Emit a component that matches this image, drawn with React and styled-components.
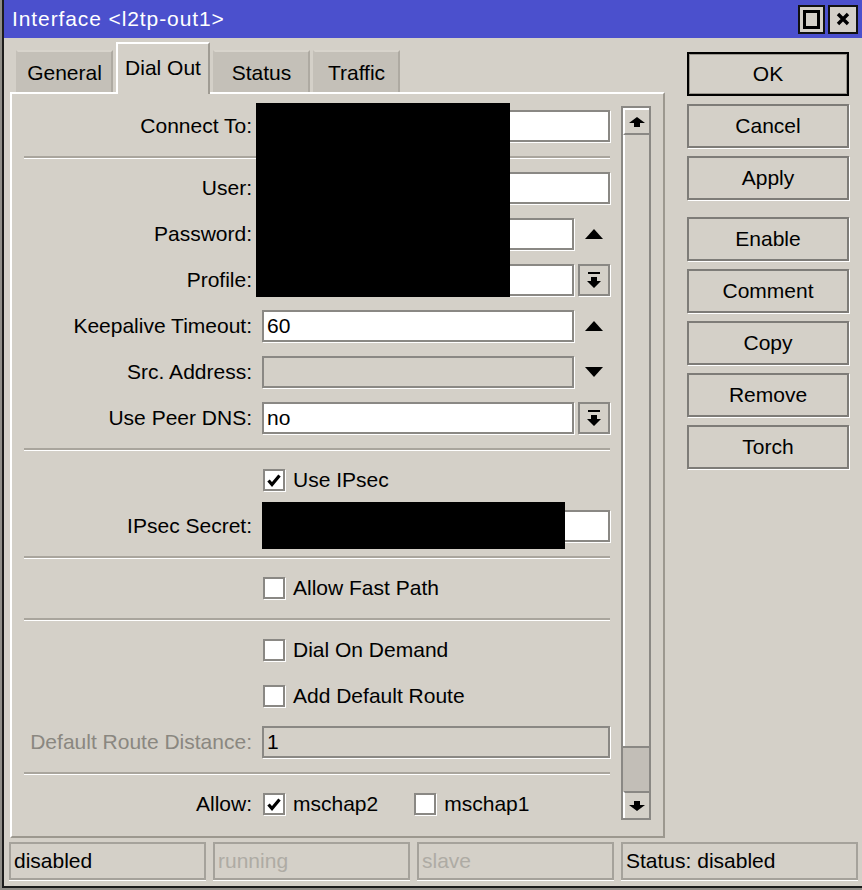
import React from "react";
import styled, { createGlobalStyle } from "styled-components";

const GlobalStyle = createGlobalStyle`
  html, body { margin: 0; padding: 0; background: #8f8d88; }
  body { font-family: "Liberation Sans", Arial, sans-serif; font-size: 21px; color: #000; }
  #root { width: 862px; height: 890px; overflow: hidden; }
  * { box-sizing: border-box; }
`;

const Window = styled.div`
  margin-left: 2px;
  width: 860px;
  height: 888px;
  background: #d4d0c8;
  border-left: 2px solid #1c1c1c;
  border-bottom: 2px solid #1c1c1c;
  display: flex;
  flex-direction: column;
`;

const TitleBar = styled.div`
  height: 38px;
  background: #4b50cd;
  display: flex;
  align-items: center;
  padding: 0 4px 0 8px;
  flex-shrink: 0;
`;

const Title = styled.div`
  color: #fff;
  font-size: 21px;
  letter-spacing: 0.9px;
  flex: 1;
  white-space: nowrap;
`;

const TitleBtn = styled.div`
  width: ${(p) => p.$w}px;
  height: 29px;
  margin-left: 3px;
  background: #d4d0c8;
  border: 2px solid #111;
  display: flex;
  align-items: center;
  justify-content: center;
`;

const Content = styled.div`
  display: flex;
  padding: 4px 0 0 6px;
  height: 800px;
`;

const Main = styled.div`
  width: 655px;
  display: flex;
  flex-direction: column;
`;

const Tabs = styled.div`
  height: 50px;
  display: flex;
  align-items: flex-end;
  padding-left: 6px;
  gap: 3px;
  position: relative;
  z-index: 1;
`;

const Tab = styled.div`
  width: ${(p) => p.$w}px;
  height: ${(p) => (p.$active ? 52 : 42)}px;
  margin-bottom: ${(p) => (p.$active ? -2 : 0)}px;
  background: ${(p) => (p.$active ? "#d4d0c8" : "#c4c0b8")};
  border-top: 2px solid ${(p) => (p.$active ? "#fff" : "#d8d4cc")};
  border-left: 2px solid ${(p) => (p.$active ? "#fff" : "#c4c0b8")};
  border-right: 2px solid ${(p) => (p.$active ? "#a09c94" : "#aeaaa2")};
  display: flex;
  align-items: ${(p) => (p.$active ? "flex-start" : "center")};
  padding-top: ${(p) => (p.$active ? 12 : 2)}px;
  justify-content: center;
  white-space: nowrap;
`;

const Panel = styled.div`
  position: relative;
  height: 746px;
  border-top: 2px solid #fff;
  border-left: 2px solid #fff;
  border-right: 2px solid #9c988f;
  border-bottom: 2px solid #9c988f;
  display: flex;
`;

const Form = styled.div`
  width: 609px;
  padding-top: 9px;
  display: flex;
  flex-direction: column;
`;

const Row = styled.div`
  display: grid;
  grid-template-columns: 240px 348px;
  column-gap: 10px;
  height: 46px;
  align-items: center;
`;

const Label = styled.div`
  text-align: right;
  white-space: nowrap;
  color: ${(p) => (p.$muted ? "#8a8780" : "#000")};
`;

const FieldGroup = styled.div`
  display: flex;
  align-items: center;
  gap: 4px;
`;

const Field = styled.div`
  width: ${(p) => (p.$short ? 312 : 348)}px;
  height: 32px;
  border: 2px solid #8a8884;
  box-shadow: 1px 1px 0 #fff;
  background: ${(p) => (p.$disabled ? "#d4d0c8" : "#fff")};
  padding-left: 3px;
  line-height: 28px;
  white-space: nowrap;
  overflow: hidden;
`;

const SideBtn = styled.div`
  width: 32px;
  height: 32px;
  border: 2px solid #8a8884;
  box-shadow: 1px 1px 0 #fff;
  background: #d4d0c8;
  display: flex;
  align-items: center;
  justify-content: center;
`;

const Glyph = styled.div`
  width: 32px;
  height: 32px;
  display: flex;
  align-items: center;
  justify-content: center;
`;

const Sep = styled.div`
  height: 16px;
  display: flex;
  align-items: center;
  padding-left: 12px;
`;

const SepLine = styled.div`
  width: 586px;
  border-top: 2px solid #a9a59d;
  border-bottom: 1px solid #fff;
`;

const Checks = styled.div`
  display: flex;
  align-items: center;
  padding-left: 1px;
`;

const Box = styled.div`
  width: 22px;
  height: 22px;
  border: 2px solid #8a8884;
  box-shadow: 1px 1px 0 #fff;
  background: #fff;
  display: flex;
  align-items: center;
  justify-content: center;
  flex-shrink: 0;
`;

const CheckText = styled.span`
  margin-left: 8px;
  margin-right: ${(p) => p.$gap || 0}px;
  white-space: nowrap;
`;

const Redact = styled.div`
  position: absolute;
  background: #000;
  left: ${(p) => p.$x}px;
  top: ${(p) => p.$y}px;
  width: ${(p) => p.$w}px;
  height: ${(p) => p.$h}px;
`;

const ScrollBar = styled.div`
  margin: 12px 0 0 0;
  width: 30px;
  height: 714px;
  border: 2px solid #8a8884;
  display: flex;
  flex-direction: column;
  background: #d4d0c8;
`;

const ScrollBtn = styled.div`
  height: 27px;
  border-top: 2px solid #fff;
  border-left: 2px solid #fff;
  border-bottom: 2px solid #8a8884;
  display: flex;
  align-items: center;
  justify-content: center;
  background: #d4d0c8;
  ${(p) => p.$down && "border-top: 2px solid #8a8884; border-bottom: none;"}
`;

const Track = styled.div`
  flex: 1;
  display: flex;
  flex-direction: column;
  justify-content: flex-end;
  border-left: 2px solid #fff;
`;

const Thumb = styled.div`
  height: 45px;
  background: #c2beb7;
  border-top: 2px solid #8a8884;
  margin-left: -2px;
`;

const Side = styled.div`
  margin-left: 22px;
  padding-top: 10px;
  width: 162px;
  display: flex;
  flex-direction: column;
  gap: 8px;
`;

const Button = styled.div`
  height: 44px;
  margin-top: ${(p) => p.$extra || 0}px;
  border: 2px solid ${(p) => (p.$default ? "#000" : "#7e7c78")};
  box-shadow: ${(p) => (p.$default ? "inset 0 0 0 1px #9a968e" : "1px 1px 0 #fff")};
  display: flex;
  align-items: center;
  justify-content: center;
  white-space: nowrap;
`;

const StatusBar = styled.div`
  margin-top: 4px;
  height: 38px;
  display: flex;
  gap: 7px;
  padding-left: 5px;
`;

const Cell = styled.div`
  width: ${(p) => p.$w}px;
  height: 38px;
  border: 2px solid #a5a29b;
  box-shadow: 0 1px 0 #fff;
  padding-left: 3px;
  line-height: 34px;
  white-space: nowrap;
  color: ${(p) => (p.$muted ? "#aeaba4" : "#000")};
`;

const UpTri = () => (
  <svg width="18" height="10" viewBox="0 0 18 10"><polygon points="9,0 18,10 0,10" fill="#000" /></svg>
);
const DownTri = () => (
  <svg width="18" height="10" viewBox="0 0 18 10"><polygon points="0,0 18,0 9,10" fill="#000" /></svg>
);
const DropIcon = () => (
  <svg width="14" height="16" viewBox="0 0 14 16">
    <rect x="1" y="0" width="12" height="2" fill="#000" />
    <polygon points="4,5 10,5 10,9 14,9 7,16 0,9 4,9" fill="#000" />
  </svg>
);
const ScrollArrow = ({ down }) => (
  <svg width="16" height="10" viewBox="0 0 16 10" style={down ? { transform: "rotate(180deg)" } : undefined}>
    <polygon points="8,0 16,6 11,6 11,10 5,10 5,6 0,6" fill="#000" />
  </svg>
);
const Check = () => (
  <svg width="14" height="13" viewBox="0 0 14 13">
    <polyline points="1.5,6.5 5,10.5 12.5,1.5" fill="none" stroke="#000" strokeWidth="3.2" />
  </svg>
);

const CheckBox = ({ checked }) => <Box>{checked && <Check />}</Box>;

export default function App() {
  return (
    <>
      <GlobalStyle />
      <Window>
        <TitleBar>
          <Title>Interface &lt;l2tp-out1&gt;</Title>
          <TitleBtn $w={27}>
            <svg width="17" height="19" viewBox="0 0 17 19">
              <rect x="1.5" y="1.5" width="14" height="16" fill="none" stroke="#000" strokeWidth="3" />
            </svg>
          </TitleBtn>
          <TitleBtn $w={30}>
            <svg width="14" height="14" viewBox="0 0 14 14">
              <path d="M2 2 L12 12 M12 2 L2 12" stroke="#000" strokeWidth="3.4" />
            </svg>
          </TitleBtn>
        </TitleBar>
        <Content>
          <Main>
            <Tabs>
              <Tab $w={97}>General</Tab>
              <Tab $w={94} $active>Dial Out</Tab>
              <Tab $w={97}>Status</Tab>
              <Tab $w={87}>Traffic</Tab>
            </Tabs>
            <Panel>
              <Form>
                <Row><Label>Connect To:</Label><Field /></Row>
                <Sep><SepLine /></Sep>
                <Row><Label>User:</Label><Field /></Row>
                <Row>
                  <Label>Password:</Label>
                  <FieldGroup><Field $short /><Glyph><UpTri /></Glyph></FieldGroup>
                </Row>
                <Row>
                  <Label>Profile:</Label>
                  <FieldGroup><Field $short /><SideBtn><DropIcon /></SideBtn></FieldGroup>
                </Row>
                <Row>
                  <Label>Keepalive Timeout:</Label>
                  <FieldGroup><Field $short>60</Field><Glyph><UpTri /></Glyph></FieldGroup>
                </Row>
                <Row>
                  <Label>Src. Address:</Label>
                  <FieldGroup><Field $short $disabled /><Glyph><DownTri /></Glyph></FieldGroup>
                </Row>
                <Row>
                  <Label>Use Peer DNS:</Label>
                  <FieldGroup><Field $short>no</Field><SideBtn><DropIcon /></SideBtn></FieldGroup>
                </Row>
                <Sep><SepLine /></Sep>
                <Row>
                  <Label />
                  <Checks><CheckBox checked /><CheckText>Use IPsec</CheckText></Checks>
                </Row>
                <Row><Label>IPsec Secret:</Label><Field /></Row>
                <Sep><SepLine /></Sep>
                <Row>
                  <Label />
                  <Checks><CheckBox /><CheckText>Allow Fast Path</CheckText></Checks>
                </Row>
                <Sep><SepLine /></Sep>
                <Row>
                  <Label />
                  <Checks><CheckBox /><CheckText>Dial On Demand</CheckText></Checks>
                </Row>
                <Row>
                  <Label />
                  <Checks><CheckBox /><CheckText>Add Default Route</CheckText></Checks>
                </Row>
                <Row>
                  <Label $muted>Default Route Distance:</Label>
                  <Field $disabled>1</Field>
                </Row>
                <Sep><SepLine /></Sep>
                <Row>
                  <Label>Allow:</Label>
                  <Checks>
                    <CheckBox checked /><CheckText $gap={36}>mschap2</CheckText>
                    <CheckBox /><CheckText>mschap1</CheckText>
                  </Checks>
                </Row>
              </Form>
              <ScrollBar>
                <ScrollBtn><ScrollArrow /></ScrollBtn>
                <Track><Thumb /></Track>
                <ScrollBtn $down><ScrollArrow down /></ScrollBtn>
              </ScrollBar>
              <Redact $x={244} $y={9} $w={254} $h={194} />
              <Redact $x={250} $y={408} $w={303} $h={47} />
            </Panel>
          </Main>
          <Side>
            <Button $default>OK</Button>
            <Button>Cancel</Button>
            <Button>Apply</Button>
            <Button $extra={9}>Enable</Button>
            <Button>Comment</Button>
            <Button>Copy</Button>
            <Button>Remove</Button>
            <Button>Torch</Button>
          </Side>
        </Content>
        <StatusBar>
          <Cell $w={197}>disabled</Cell>
          <Cell $w={197} $muted>running</Cell>
          <Cell $w={197} $muted>slave</Cell>
          <Cell $w={237}>Status: disabled</Cell>
        </StatusBar>
      </Window>
    </>
  );
}
